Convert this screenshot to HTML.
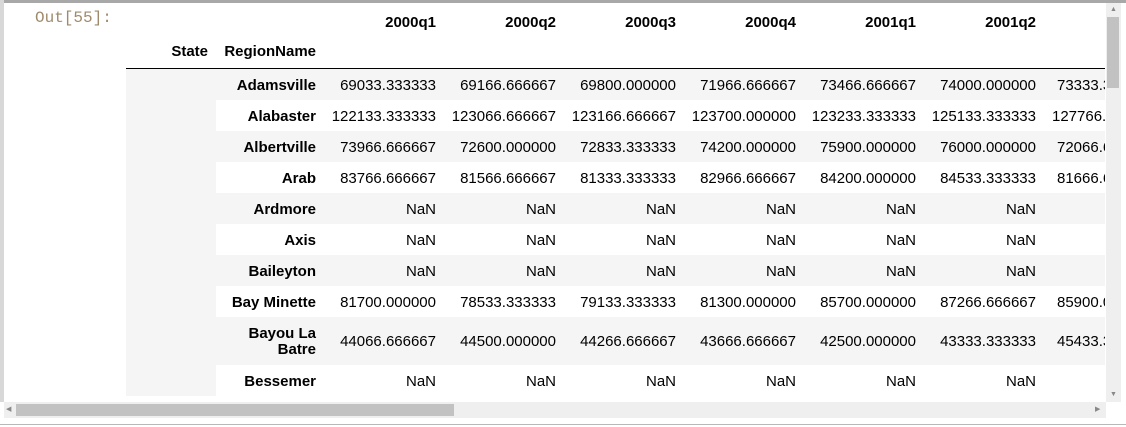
<!DOCTYPE html>
<html><head><style>
body{margin:0;width:1126px;height:427px;background:#fff;position:relative;overflow:hidden;font-family:"Liberation Sans",Arial,sans-serif;font-size:15px;color:#000}
.topb{position:absolute;left:0;top:0;width:1126px;height:3px;background:#a8a8a8}
.leftb{position:absolute;left:0;top:0;width:4px;height:402px;background:#d8d8d8}
.prompt{position:absolute;left:35px;top:9px;font-family:"Liberation Mono",monospace;font-size:16px;color:#a08a6c}
.clip{position:absolute;left:126px;top:10px;width:979px;height:389px;overflow:hidden}
table{border-collapse:collapse;table-layout:fixed;width:1110px}
td,th{padding:0 8px 0 0;text-align:right;white-space:nowrap;line-height:16px}
tbody td,tbody th{padding-top:3px}
th{font-weight:bold}
.h1 td,.h1 th{height:26px}
.h2 th{height:32px;border-bottom:1px solid #000}
tbody tr{height:31px}
tbody tr:nth-child(odd){background:#f5f5f5}
tbody tr:nth-child(even){background:#fff}
.st{background:#f5f5f5}
.l5{text-align:left;padding-left:13px}
.l6{text-align:left;padding-left:8px}
.vs{position:absolute;left:1106px;top:3px;width:15px;height:399px;background:#efefef}
.vthumb{position:absolute;left:1107px;top:17px;width:12px;height:71px;background:#c2c2c2}
.hs{position:absolute;left:4px;top:402px;width:1102px;height:16px;background:#efefef}
.hthumb{position:absolute;left:16px;top:404px;width:438px;height:12px;background:#c2c2c2}
.bot{position:absolute;left:0;top:424px;width:1126px;height:1px;background:#b8b8b8}
.arr{position:absolute;font-size:7px;color:#888}
</style></head><body>
<div class="topb"></div><div class="leftb"></div>
<div class="prompt">Out[55]:</div>
<div class="clip">
<table>
<colgroup><col style="width:90px"><col style="width:108px"><col style="width:120px"><col style="width:120px"><col style="width:120px"><col style="width:120px"><col style="width:120px"><col style="width:120px"><col style="width:192px"></colgroup>
<thead>
<tr class="h1"><th></th><th></th><th>2000q1</th><th>2000q2</th><th>2000q3</th><th>2000q4</th><th>2001q1</th><th>2001q2</th><th></th></tr>
<tr class="h2"><th>State</th><th>RegionName</th><th></th><th></th><th></th><th></th><th></th><th></th><th></th></tr>
</thead>
<tbody>
<tr><td class="st" rowspan="10"></td><th>Adamsville</th><td>69033.333333</td><td>69166.666667</td><td>69800.000000</td><td>71966.666667</td><td>73466.666667</td><td>74000.000000</td><td class="l5">73333.333333</td></tr>
<tr><th>Alabaster</th><td>122133.333333</td><td>123066.666667</td><td>123166.666667</td><td>123700.000000</td><td>123233.333333</td><td>125133.333333</td><td class="l6">127766.666667</td></tr>
<tr><th>Albertville</th><td>73966.666667</td><td>72600.000000</td><td>72833.333333</td><td>74200.000000</td><td>75900.000000</td><td>76000.000000</td><td class="l5">72066.666667</td></tr>
<tr><th>Arab</th><td>83766.666667</td><td>81566.666667</td><td>81333.333333</td><td>82966.666667</td><td>84200.000000</td><td>84533.333333</td><td class="l5">81666.666667</td></tr>
<tr><th>Ardmore</th><td>NaN</td><td>NaN</td><td>NaN</td><td>NaN</td><td>NaN</td><td>NaN</td><td></td></tr>
<tr><th>Axis</th><td>NaN</td><td>NaN</td><td>NaN</td><td>NaN</td><td>NaN</td><td>NaN</td><td></td></tr>
<tr><th>Baileyton</th><td>NaN</td><td>NaN</td><td>NaN</td><td>NaN</td><td>NaN</td><td>NaN</td><td></td></tr>
<tr><th>Bay Minette</th><td>81700.000000</td><td>78533.333333</td><td>79133.333333</td><td>81300.000000</td><td>85700.000000</td><td>87266.666667</td><td class="l5">85900.000000</td></tr>
<tr style="height:48px"><th>Bayou La<br>Batre</th><td>44066.666667</td><td>44500.000000</td><td>44266.666667</td><td>43666.666667</td><td>42500.000000</td><td>43333.333333</td><td class="l5">45433.333333</td></tr>
<tr><th>Bessemer</th><td>NaN</td><td>NaN</td><td>NaN</td><td>NaN</td><td>NaN</td><td>NaN</td><td></td></tr>
</tbody></table>
</div>
<div class="vs"></div><div class="vthumb"></div>
<div class="arr" style="left:1110px;top:6px">▲</div>
<div class="arr" style="left:1110px;top:391px">▼</div>
<div class="hs"></div><div class="hthumb"></div>
<div class="arr" style="left:6px;top:405px">◀</div>
<div class="arr" style="left:1095px;top:405px">▶</div>
<div class="bot"></div>
</body></html>
